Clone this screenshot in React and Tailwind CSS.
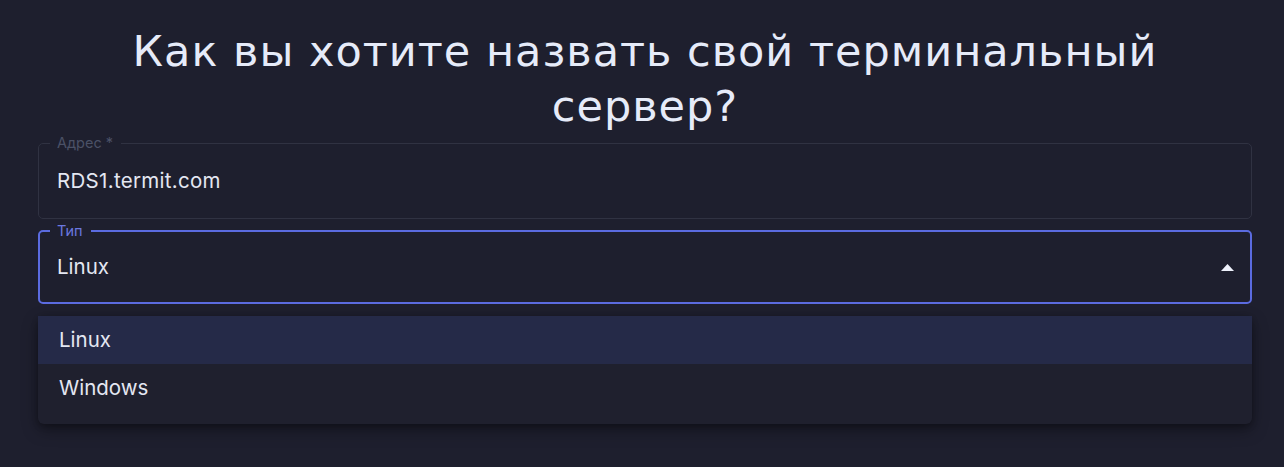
export default function App() {
  return (
    <div className="min-h-[467px] bg-[#1e1f2e] pl-[38px] pr-[32px] pt-[24px] font-['Inter',sans-serif]">
      <h1 className="text-center font-['DejaVu_Sans',sans-serif] text-[43px] leading-[55px] tracking-[1px] text-[#e6ebf9]">
        Как вы хотите назвать свой терминальный
        <br />
        сервер?
      </h1>

      {/* Address field, outlined with a notched label */}
      <fieldset className="mt-[1px] rounded-[5px] border border-[#303242]">
        <legend className="ml-[11px] pl-[7px] pr-[8px] text-[14.5px] leading-4 text-[#4b5166]">
          Адрес *
        </legend>
        <div className="pb-[23px] pl-[18px] pt-[16px] text-[20.5px] leading-[28px] tracking-[0.3px] text-[#e4e7f2]">
          RDS1.termit.com
        </div>
      </fieldset>

      {/* Type select, focused and open */}
      <div className="relative mt-[4px]">
        <fieldset className="rounded-[5px] border-2 border-[#5b6be0]">
          <legend className="ml-[10px] pl-[7px] pr-[8px] text-[14.5px] leading-4 text-[#6b78e0]">
            Тип
          </legend>
          <div className="flex items-center justify-between pb-[21px] pl-[17px] pr-[17px] pt-[14px]">
            <span className="text-[20.5px] leading-[28px] text-[#e4e7f2]">Linux</span>
            <svg width="13" height="7" viewBox="0 0 13 7" className="mr-[-1px]">
              <path d="M0 7 L6.5 0 L13 7 Z" fill="#eef1fb" />
            </svg>
          </div>
        </fieldset>

        <div className="absolute left-0 right-0 top-full mt-[12px] rounded-[6px] bg-[#1f202e] pb-[12px] shadow-[0_6px_16px_rgba(0,0,0,0.35),0_2px_6px_rgba(0,0,0,0.25)]">
          <div className="flex h-[48px] items-center bg-[#252a48] pl-[21px] text-[20.5px] text-[#e4e7f2]">
            Linux
          </div>
          <div className="flex h-[48px] items-center pl-[21px] text-[20.5px] text-[#e4e7f2]">
            Windows
          </div>
        </div>
      </div>
    </div>
  );
}
